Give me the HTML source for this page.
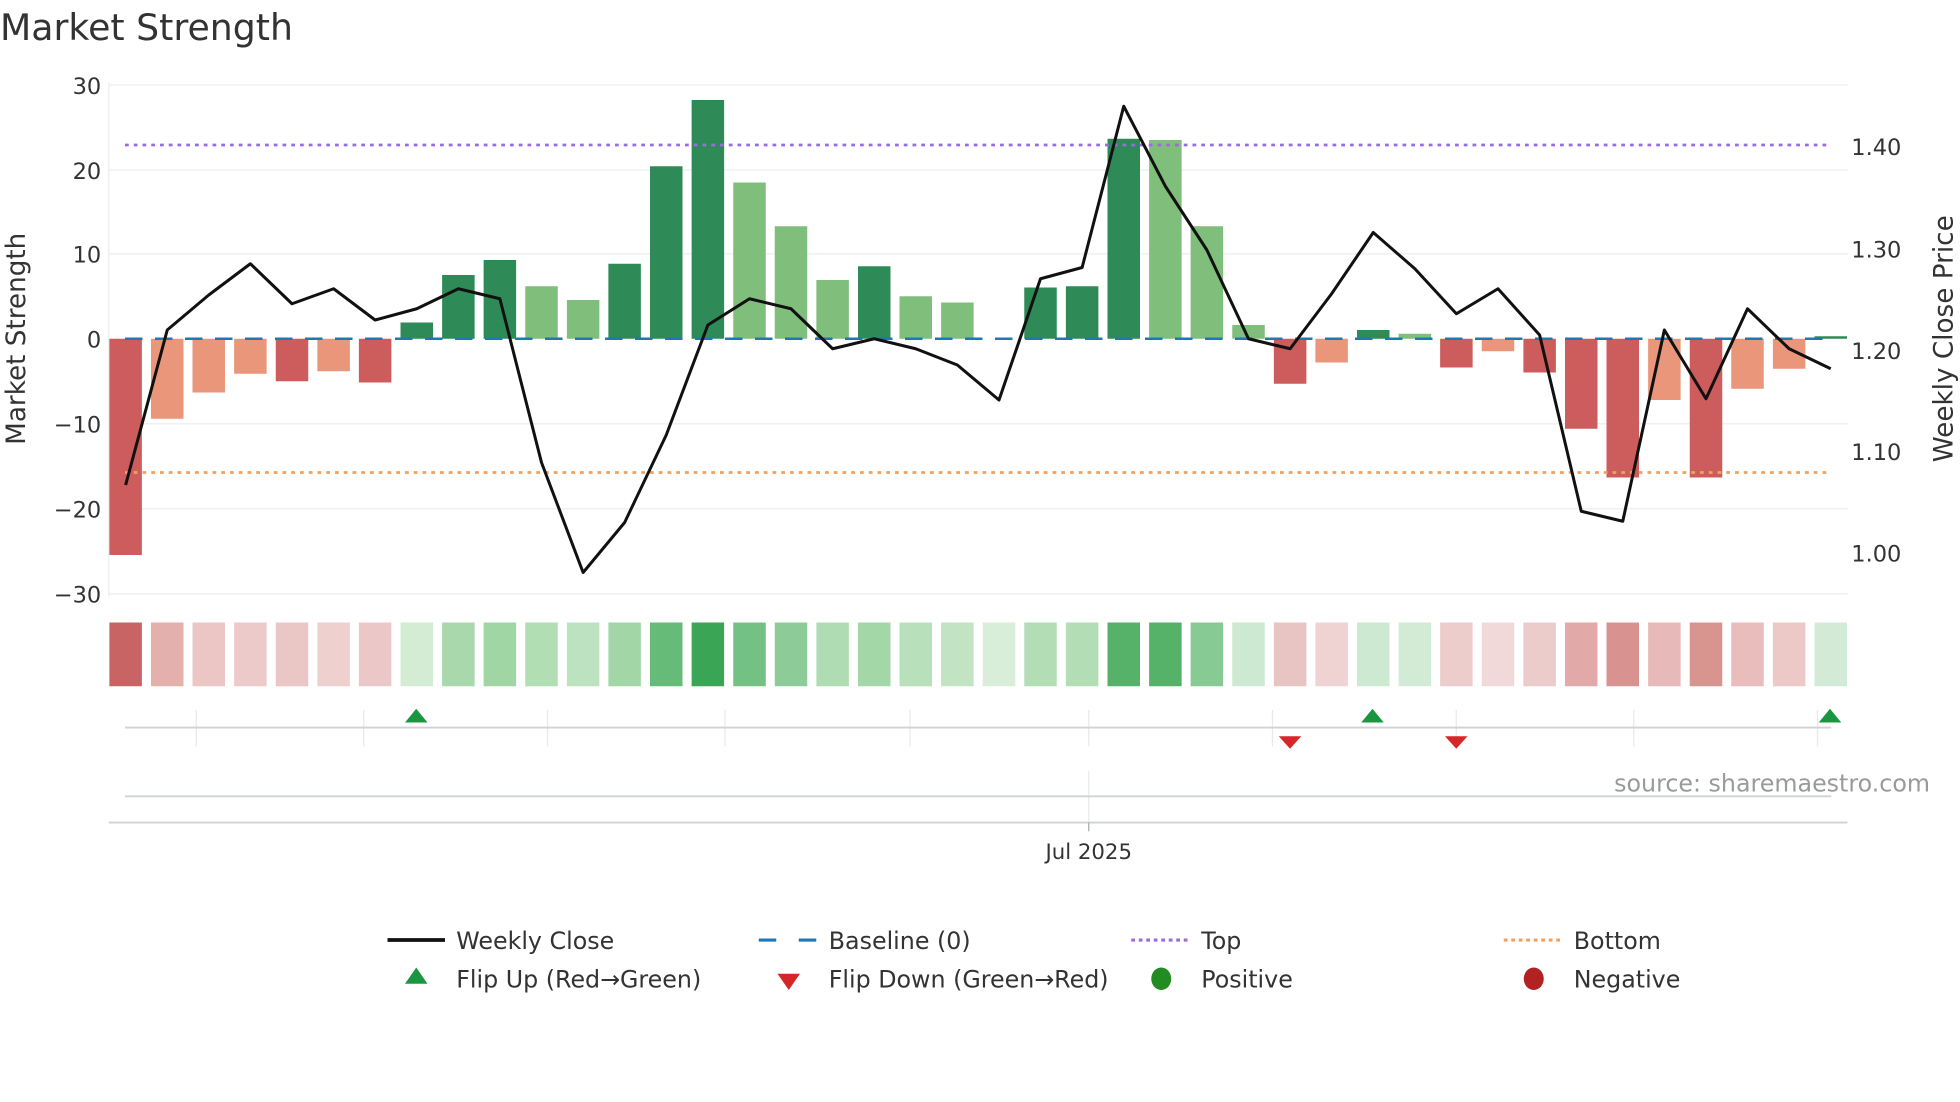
<!DOCTYPE html>
<html><head><meta charset="utf-8"><style>
html,body{margin:0;padding:0;background:#fff;width:1960px;height:1102px;overflow:hidden}
svg{display:block}
text{font-family:"DejaVu Sans","Liberation Sans",sans-serif;fill:#333}
</style></head><body>
<svg width="1960" height="1102" viewBox="0 0 1568 881.6" xmlns="http://www.w3.org/2000/svg">
<rect width="1568" height="882" fill="#fff"/>
<text x="0" y="32" font-size="29">Market Strength</text>
<g stroke="#eef0f2" stroke-width="1.2">
<line x1="87" x2="1478" y1="68" y2="68"/><line x1="87" x2="1478" y1="136" y2="136"/>
<line x1="87" x2="1478" y1="203" y2="203"/><line x1="87" x2="1478" y1="339" y2="339"/>
<line x1="87" x2="1478" y1="407" y2="407"/><line x1="87" x2="1478" y1="475" y2="475"/>
<line x1="87" x2="87" y1="66" y2="477"/>
</g>
<g font-size="18" text-anchor="end">
<text x="81" y="75">30</text><text x="81" y="143">20</text><text x="81" y="210">10</text>
<text x="81" y="278">0</text><text x="81" y="346">−10</text><text x="81" y="414">−20</text><text x="81" y="482">−30</text>
</g>
<g font-size="18">
<text x="1481" y="124">1.40</text><text x="1481" y="206">1.30</text><text x="1481" y="287">1.20</text>
<text x="1481" y="368">1.10</text><text x="1481" y="449">1.00</text>
</g>
<text transform="translate(20,271) rotate(-90)" font-size="21" text-anchor="middle">Market Strength</text>
<text transform="translate(1562,271) rotate(-90)" font-size="21" text-anchor="middle">Weekly Close Price</text>
<g>
<rect x="87.5" y="271" width="26" height="173" fill="#cd5c5c"/>
<rect x="120.8" y="271" width="26" height="64" fill="#e9967a"/>
<rect x="154" y="271" width="26" height="43" fill="#e9967a"/>
<rect x="187.3" y="271" width="26" height="28" fill="#e9967a"/>
<rect x="220.6" y="271" width="26" height="34" fill="#cd5c5c"/>
<rect x="253.9" y="271" width="26" height="26" fill="#e9967a"/>
<rect x="287.1" y="271" width="26" height="35" fill="#cd5c5c"/>
<rect x="320.4" y="258" width="26" height="13" fill="#2e8b57"/>
<rect x="353.7" y="220" width="26" height="51" fill="#2e8b57"/>
<rect x="386.9" y="208" width="26" height="63" fill="#2e8b57"/>
<rect x="420.2" y="229" width="26" height="42" fill="#7fbf7b"/>
<rect x="453.5" y="240" width="26" height="31" fill="#7fbf7b"/>
<rect x="486.7" y="211" width="26" height="60" fill="#2e8b57"/>
<rect x="520" y="133" width="26" height="138" fill="#2e8b57"/>
<rect x="553.3" y="80" width="26" height="191" fill="#2e8b57"/>
<rect x="586.6" y="146" width="26" height="125" fill="#7fbf7b"/>
<rect x="619.8" y="181" width="26" height="90" fill="#7fbf7b"/>
<rect x="653.1" y="224" width="26" height="47" fill="#7fbf7b"/>
<rect x="686.4" y="213" width="26" height="58" fill="#2e8b57"/>
<rect x="719.6" y="237" width="26" height="34" fill="#7fbf7b"/>
<rect x="752.9" y="242" width="26" height="29" fill="#7fbf7b"/>
<rect x="819.4" y="230" width="26" height="41" fill="#2e8b57"/>
<rect x="852.7" y="229" width="26" height="42" fill="#2e8b57"/>
<rect x="886" y="111" width="26" height="160" fill="#2e8b57"/>
<rect x="919.3" y="112" width="26" height="159" fill="#7fbf7b"/>
<rect x="952.5" y="181" width="26" height="90" fill="#7fbf7b"/>
<rect x="985.8" y="260" width="26" height="11" fill="#7fbf7b"/>
<rect x="1019.1" y="271" width="26" height="36" fill="#cd5c5c"/>
<rect x="1052.3" y="271" width="26" height="19" fill="#e9967a"/>
<rect x="1085.6" y="264" width="26" height="7" fill="#2e8b57"/>
<rect x="1118.9" y="267" width="26" height="4" fill="#7fbf7b"/>
<rect x="1152.1" y="271" width="26" height="23" fill="#cd5c5c"/>
<rect x="1185.4" y="271" width="26" height="10" fill="#e9967a"/>
<rect x="1218.7" y="271" width="26" height="27" fill="#cd5c5c"/>
<rect x="1252" y="271" width="26" height="72" fill="#cd5c5c"/>
<rect x="1285.2" y="271" width="26" height="111" fill="#cd5c5c"/>
<rect x="1318.5" y="271" width="26" height="49" fill="#e9967a"/>
<rect x="1351.8" y="271" width="26" height="111" fill="#cd5c5c"/>
<rect x="1385" y="271" width="26" height="40" fill="#e9967a"/>
<rect x="1418.3" y="271" width="26" height="24" fill="#e9967a"/>
<rect x="1451.6" y="269" width="26" height="2" fill="#2e8b57"/>
</g>
<line x1="100" x2="1465" y1="271" y2="271" stroke="#1f77b4" stroke-width="2" stroke-dasharray="14,10"/>
<line x1="100" x2="1465" y1="116" y2="116" stroke="#9b6cdb" stroke-width="2.2" stroke-dasharray="3,4"/>
<line x1="100" x2="1465" y1="378" y2="378" stroke="#f0a060" stroke-width="2.2" stroke-dasharray="3,4"/>
<polyline fill="none" stroke="#111" stroke-width="2.4" stroke-linejoin="round" points="100.5,388 133.8,264 167,236 200.3,211 233.6,243 266.9,231 300.1,256 333.4,247 366.7,231 399.9,239 433.2,370 466.5,458 499.7,418 533,348 566.3,260 599.6,239 632.8,247 666.1,279 699.4,271 732.6,279 765.9,292 799.2,320 832.4,223 865.7,214 899,85 932.3,149 965.5,200 998.8,271 1032.1,279 1065.3,235 1098.6,186 1131.9,215 1165.1,251 1198.4,231 1231.7,268 1265,409 1298.2,417 1331.5,264 1364.8,319 1398,247 1431.3,279 1464.6,295"/>
<g>
<rect x="87.5" y="498" width="26" height="51" fill="#c86464"/>
<rect x="120.8" y="498" width="26" height="51" fill="#e3b0ae"/>
<rect x="154" y="498" width="26" height="51" fill="#ecc6c5"/>
<rect x="187.3" y="498" width="26" height="51" fill="#eccac9"/>
<rect x="220.6" y="498" width="26" height="51" fill="#eac6c5"/>
<rect x="253.9" y="498" width="26" height="51" fill="#eed0cf"/>
<rect x="287.1" y="498" width="26" height="51" fill="#ebc8c7"/>
<rect x="320.4" y="498" width="26" height="51" fill="#d4ecd4"/>
<rect x="353.7" y="498" width="26" height="51" fill="#a8d8ab"/>
<rect x="386.9" y="498" width="26" height="51" fill="#a0d6a4"/>
<rect x="420.2" y="498" width="26" height="51" fill="#b2deb4"/>
<rect x="453.5" y="498" width="26" height="51" fill="#bde2bf"/>
<rect x="486.7" y="498" width="26" height="51" fill="#a2d6a6"/>
<rect x="520" y="498" width="26" height="51" fill="#66bb78"/>
<rect x="553.3" y="498" width="26" height="51" fill="#3aa655"/>
<rect x="586.6" y="498" width="26" height="51" fill="#74c184"/>
<rect x="619.8" y="498" width="26" height="51" fill="#8dcc98"/>
<rect x="653.1" y="498" width="26" height="51" fill="#b0dcb3"/>
<rect x="686.4" y="498" width="26" height="51" fill="#a4d7a8"/>
<rect x="719.6" y="498" width="26" height="51" fill="#b8e0ba"/>
<rect x="752.9" y="498" width="26" height="51" fill="#c2e4c3"/>
<rect x="786.2" y="498" width="26" height="51" fill="#d8eed9"/>
<rect x="819.4" y="498" width="26" height="51" fill="#b2ddb5"/>
<rect x="852.7" y="498" width="26" height="51" fill="#b2ddb5"/>
<rect x="886" y="498" width="26" height="51" fill="#56b169"/>
<rect x="919.3" y="498" width="26" height="51" fill="#56b169"/>
<rect x="952.5" y="498" width="26" height="51" fill="#88ca94"/>
<rect x="985.8" y="498" width="26" height="51" fill="#cde9d2"/>
<rect x="1019.1" y="498" width="26" height="51" fill="#e8c4c3"/>
<rect x="1052.3" y="498" width="26" height="51" fill="#efd3d3"/>
<rect x="1085.6" y="498" width="26" height="51" fill="#cde9d2"/>
<rect x="1118.9" y="498" width="26" height="51" fill="#d2ebd5"/>
<rect x="1152.1" y="498" width="26" height="51" fill="#edcdcc"/>
<rect x="1185.4" y="498" width="26" height="51" fill="#f2d9d9"/>
<rect x="1218.7" y="498" width="26" height="51" fill="#eccbcb"/>
<rect x="1252" y="498" width="26" height="51" fill="#e1aaa8"/>
<rect x="1285.2" y="498" width="26" height="51" fill="#d89390"/>
<rect x="1318.5" y="498" width="26" height="51" fill="#e7b9b8"/>
<rect x="1351.8" y="498" width="26" height="51" fill="#d8948f"/>
<rect x="1385" y="498" width="26" height="51" fill="#e9bdbc"/>
<rect x="1418.3" y="498" width="26" height="51" fill="#ecc8c7"/>
<rect x="1451.6" y="498" width="26" height="51" fill="#d3ebd6"/>
</g>
<g stroke="#e8eaed" stroke-width="1">
<line x1="157" x2="157" y1="568" y2="597"/><line x1="291" x2="291" y1="568" y2="597"/>
<line x1="438" x2="438" y1="568" y2="597"/><line x1="580" x2="580" y1="568" y2="597"/>
<line x1="728" x2="728" y1="568" y2="597"/><line x1="871" x2="871" y1="568" y2="597"/>
<line x1="1018" x2="1018" y1="568" y2="597"/><line x1="1165" x2="1165" y1="568" y2="597"/>
<line x1="1307" x2="1307" y1="568" y2="597"/><line x1="1454" x2="1454" y1="568" y2="597"/>
<line x1="871" x2="871" y1="617" y2="658"/>
</g>
<line x1="100" x2="1465" y1="582" y2="582" stroke="#d0d3d6" stroke-width="1.5"/>
<g fill="#1a9641">
<polygon points="324,578 342,578 333,567"/><polygon points="1089,578 1107,578 1098,567"/><polygon points="1455,578 1473,578 1464,567"/>
</g>
<g fill="#d62728">
<polygon points="1023,589 1041,589 1032,599"/><polygon points="1156,589 1174,589 1165,599"/>
</g>
<line x1="100" x2="1465" y1="637" y2="637" stroke="#d0d3d6" stroke-width="1.5"/>
<line x1="87" x2="1478" y1="658" y2="658" stroke="#d0d3d6" stroke-width="1.5"/>
<line x1="871" x2="871" y1="658" y2="665" stroke="#aaa" stroke-width="1"/>
<text x="871" y="687" font-size="17" text-anchor="middle">Jul 2025</text>
<text x="1544" y="633" font-size="19" text-anchor="end" style="fill:#9a9a9a">source: sharemaestro.com</text>
<g font-size="19">
<line x1="310" x2="356" y1="752" y2="752" stroke="#111" stroke-width="3"/>
<text x="365" y="759">Weekly Close</text>
<line x1="607" x2="655" y1="752" y2="752" stroke="#1f77b4" stroke-width="2.5" stroke-dasharray="14,18"/>
<text x="663" y="759">Baseline (0)</text>
<line x1="905" x2="951" y1="752" y2="752" stroke="#9b6cdb" stroke-width="2.5" stroke-dasharray="3,3"/>
<text x="961" y="759">Top</text>
<line x1="1203" x2="1249" y1="752" y2="752" stroke="#f0a060" stroke-width="2.5" stroke-dasharray="3,3"/>
<text x="1259" y="759">Bottom</text>
<polygon points="324,787 342,787 333,774" fill="#1a9641"/>
<text x="365" y="790">Flip Up (Red→Green)</text>
<polygon points="622,779 640,779 631,792" fill="#d62728"/>
<text x="663" y="790">Flip Down (Green→Red)</text>
<ellipse cx="929" cy="783" rx="8" ry="9" fill="#228b22"/>
<text x="961" y="790">Positive</text>
<ellipse cx="1227" cy="783" rx="8" ry="9" fill="#b22222"/>
<text x="1259" y="790">Negative</text>
</g>
</svg>
</body></html>
